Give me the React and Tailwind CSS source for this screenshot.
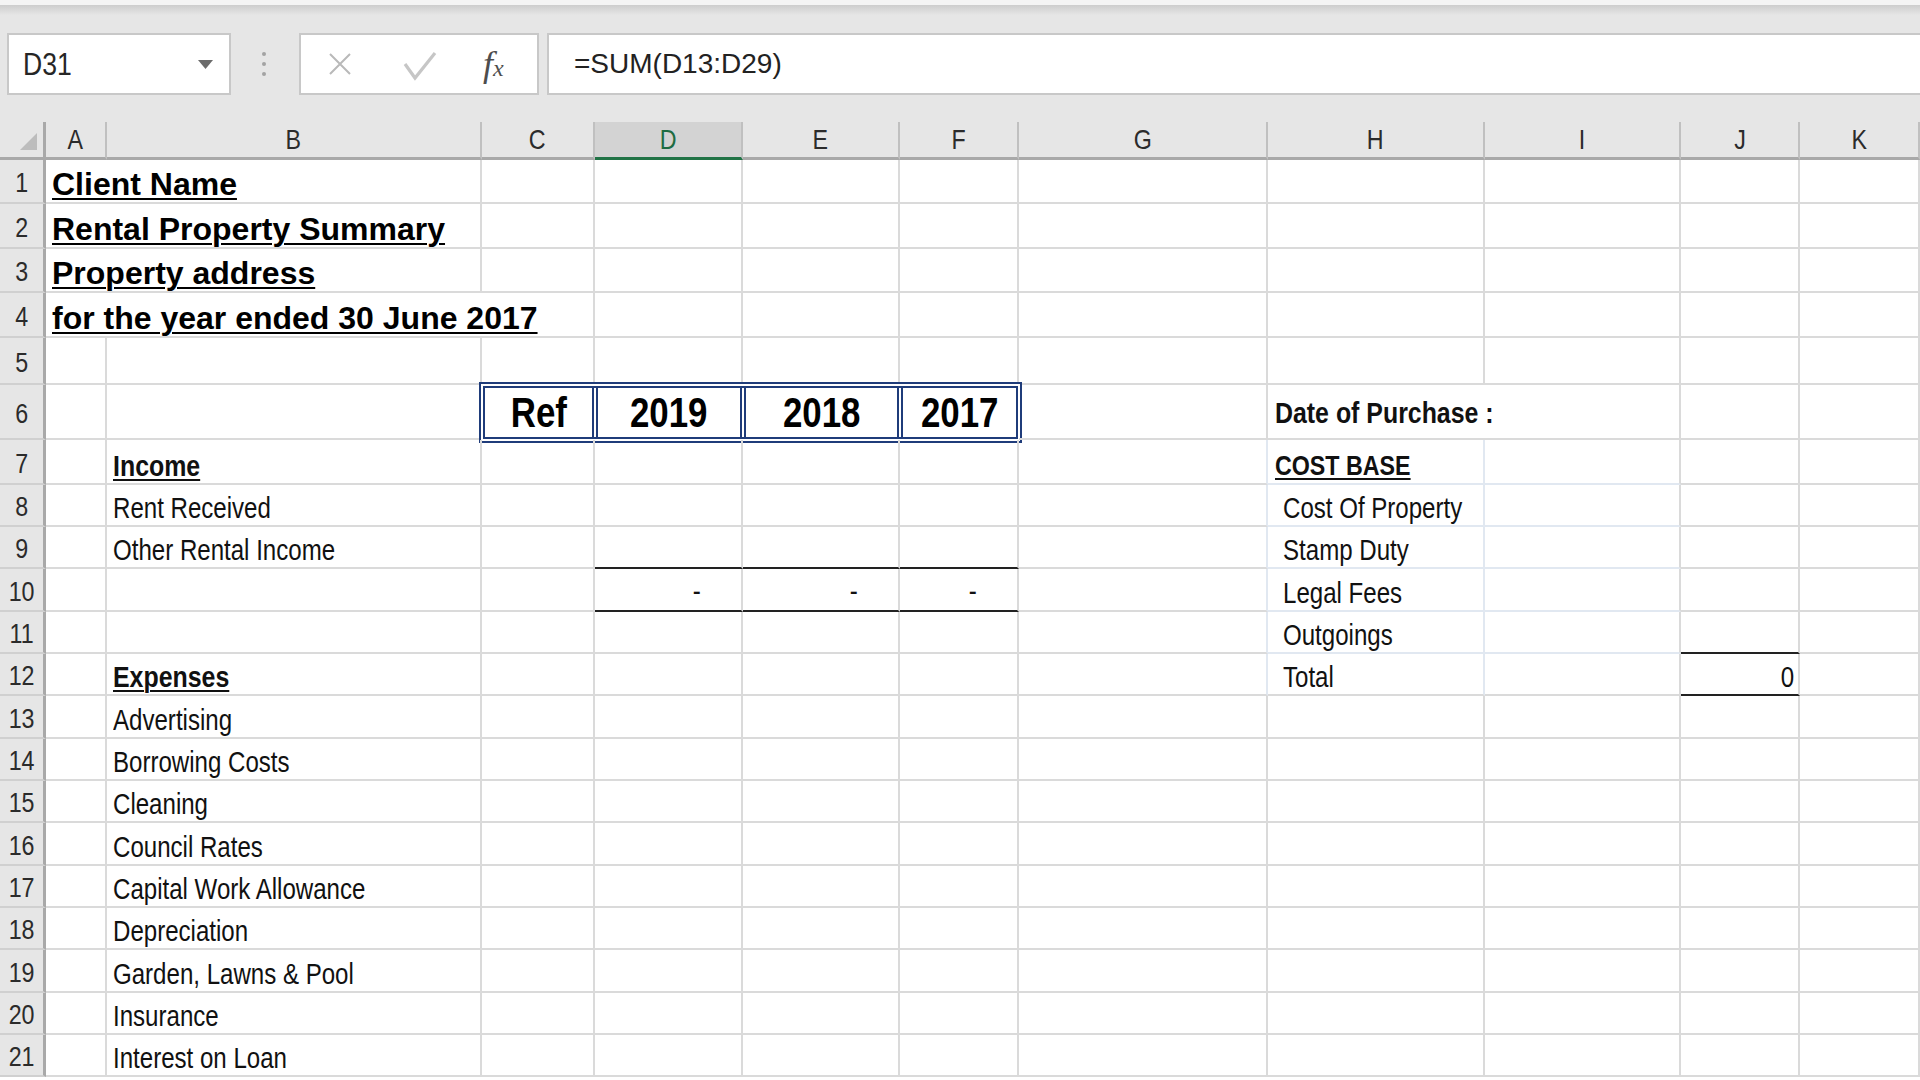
import React from "react";
import clsx from "clsx";

// Excel-style sheet: formula bar + grid, columns A..K, rows 1..21.
// No narrow face is installed, so the Arial-Narrow text is Liberation Sans squeezed with scale-x.
const SANS = "font-['Liberation_Sans',Arial,sans-serif]";
const GRID_COLS =
  "grid grid-cols-[46px_61px_375px_113px_148px_157px_119px_249px_217px_196px_119px_120px]";
const LETTERS = ["A", "B", "C", "D", "E", "F", "G", "H", "I", "J", "K"];
const SPAN = { 1: "", 2: "col-span-2", 3: "col-span-3", 4: "col-span-4" };
const ORIGIN = { left: "origin-left", right: "origin-right", center: "origin-center" };

function Title({ children }) {
  return (
    <span
      className={`${SANS} text-[32px] font-bold leading-[32px] underline decoration-2 underline-offset-[3px] whitespace-nowrap text-black`}
    >
      {children}
    </span>
  );
}

// narrow text (Arial Narrow look)
function Txt({ bold, size = "text-[29px] leading-[29px]", origin = "left", className, children }) {
  return (
    <span
      className={clsx(
        SANS,
        "inline-block scale-x-[0.83] whitespace-nowrap",
        ORIGIN[origin],
        size,
        bold && "font-bold",
        className || "text-[#111]"
      )}
    >
      {children}
    </span>
  );
}

function Heading({ size = "text-[30px] leading-[30px]", children }) {
  return (
    <Txt bold className="text-[#111] underline decoration-2 underline-offset-[3px]" size={size}>
      {children}
    </Txt>
  );
}

function YearBox() {
  return (
    <div className="-m-[3px] w-[calc(100%+6px)] h-[calc(100%+6px)] flex bg-white border-[6px] border-double border-[#1f3c7a]">
      {[
        ["Ref", "w-[107px]"],
        ["2019", "w-[148px] border-l-[6px] border-double border-[#1f3c7a]"],
        ["2018", "w-[157px] border-l-[6px] border-double border-[#1f3c7a]"],
        ["2017", "flex-1 border-l-[6px] border-double border-[#1f3c7a]"],
      ].map(([label, cls]) => (
        <div key={label} className={clsx("flex items-center justify-center pt-[1px]", cls)}>
          <Txt bold origin="center" size="text-[42px] leading-none" className="text-black">
            {label}
          </Txt>
        </div>
      ))}
    </div>
  );
}

function Row({ n, h, cells = {} }) {
  const out = [];
  for (let i = 0; i < LETTERS.length; i++) {
    const L = LETTERS[i];
    const c = cells[L] || {};
    const span = c.span || 1;
    out.push(
      <div
        key={L}
        className={clsx(
          "min-w-0 flex",
          SPAN[span],
          !c.bare && "border-r-2 border-b-2",
          !c.bare && (c.right || "border-r-[#dadada]"),
          !c.bare && (c.bottom || "border-b-[#dadada]"),
          c.className || "items-end pl-[6px] pb-[2px]"
        )}
      >
        {c.content}
      </div>
    );
    i += span - 1;
  }
  return (
    <div className={clsx(GRID_COLS, h)}>
      <div className="flex items-center justify-center pt-[4px] bg-[#e6e6e6] border-r-[3px] border-r-[#a9a9a9] border-b-2 border-b-[#d0d0d0]">
        <Txt origin="center" size="text-[28px] leading-none" className="text-[#2b2b2b]">
          {n}
        </Txt>
      </div>
      {out}
    </div>
  );
}

function ColumnHeaders() {
  return (
    <div className={clsx(GRID_COLS, "h-[38px]")}>
      <div className="relative bg-[#e6e6e6] border-r-[3px] border-r-[#a9a9a9] border-b-[3px] border-b-[#a9a9a9]">
        <svg className="absolute left-[20px] top-[11px]" width="17" height="17" viewBox="0 0 17 17">
          <polygon points="17,0 17,17 0,17" fill="#bdbdbd" />
        </svg>
      </div>
      {LETTERS.map((L) => (
        <div
          key={L}
          className={clsx(
            "flex items-center justify-center border-r-2 border-r-[#c0c0c0] border-b-[3px]",
            L === "D" ? "bg-[#d3d3d3] border-b-[#217346]" : "bg-[#e6e6e6] border-b-[#a9a9a9]"
          )}
        >
          <Txt
            origin="center"
            size="text-[28px] leading-none"
            className={L === "D" ? "text-[#1e6c42]" : "text-[#2b2b2b]"}
          >
            {L}
          </Txt>
        </div>
      ))}
    </div>
  );
}

function FormulaBar() {
  return (
    <div className="h-[122px] bg-[#e6e6e6] flex flex-col">
      <div className="h-[5px] bg-[#f4f4f4]" />
      <div className="h-[10px] bg-gradient-to-b from-[#cdcdcd] to-[#e6e6e6]" />
      <div className="mt-[18px] h-[62px] flex items-stretch">
        <div className="ml-[7px] w-[224px] bg-white border-2 border-[#c8c8c8] flex items-center pl-[14px] pr-[16px]">
          <Txt size="text-[32px] leading-none" className="text-[#262626]">
            D31
          </Txt>
          <svg className="ml-auto" width="15" height="9" viewBox="0 0 15 9">
            <polygon points="0,0 15,0 7.5,9" fill="#6b6b6b" />
          </svg>
        </div>
        <div className="ml-[31px] w-[4px] flex flex-col justify-center gap-[6px]">
          <div className="w-[4px] h-[4px] rounded-full bg-[#a3a3a3]" />
          <div className="w-[4px] h-[4px] rounded-full bg-[#a3a3a3]" />
          <div className="w-[4px] h-[4px] rounded-full bg-[#a3a3a3]" />
        </div>
        <div className="ml-[33px] w-[240px] bg-white border-2 border-[#c8c8c8] flex items-center">
          <svg className="ml-[27px]" width="24" height="24" viewBox="0 0 24 24">
            <path d="M2 2 L22 22 M22 2 L2 22" stroke="#b9b9b9" strokeWidth="2" fill="none" />
          </svg>
          <svg className="ml-[51px] mt-[4px]" width="34" height="30" viewBox="0 0 34 30">
            <path d="M2 13 L12 27 L32 2" stroke="#c6c6c6" strokeWidth="3.2" fill="none" />
          </svg>
          <span className="ml-[46px] font-['Liberation_Serif',serif] italic text-[#4d4d4d] leading-none whitespace-nowrap">
            <span className="text-[36px]">f</span>
            <span className="text-[24px]">x</span>
          </span>
        </div>
        <div className="ml-[8px] flex-1 bg-white border-2 border-r-0 border-[#c8c8c8] flex items-center pl-[25px]">
          <span className={`${SANS} text-[28px] leading-none text-[#222]`}>=SUM(D13:D29)</span>
        </div>
      </div>
    </div>
  );
}

const dash = { content: <Txt origin="right">-</Txt>, className: "items-end justify-end pr-[40px] pb-[4px]" };
const black = "border-b-[#222]";
const indent = "items-end pl-[15px] pb-[2px]";
// the cost-base block carries faint bluish cell borders
const pale = { right: "border-r-[#e1e8f1]", bottom: "border-b-[#e1e8f1]" };

const rows = [
  { n: 1, h: "h-[44px]", cells: { A: { span: 2, content: <Title>Client Name</Title> } } },
  { n: 2, h: "h-[45px]", cells: { A: { span: 2, content: <Title>Rental Property Summary</Title> } } },
  { n: 3, h: "h-[44px]", cells: { A: { span: 2, content: <Title>Property address</Title> } } },
  { n: 4, h: "h-[45px]", cells: { A: { span: 3, content: <Title>for the year ended 30 June 2017</Title> } } },
  { n: 5, h: "h-[47px]" },
  {
    n: 6,
    h: "h-[55px]",
    cells: {
      C: { span: 4, bare: true, className: "flex", content: <YearBox /> },
      H: {
        span: 2,
        className: "items-center pl-[7px] pt-[2px]",
        content: (
          <Txt bold size="text-[30px] leading-none">
            Date of Purchase :
          </Txt>
        ),
      },
    },
  },
  {
    n: 7,
    h: "h-[45px]",
    cells: {
      B: { content: <Heading>Income</Heading> },
      G: { right: pale.right },
      H: {
        ...pale,
        content: <Heading size="text-[28px] leading-[28px]">COST BASE</Heading>,
        className: "items-end pl-[7px] pb-[3px]",
      },
      I: { bottom: pale.bottom },
    },
  },
  {
    n: 8,
    h: "h-[42px]",
    cells: {
      B: { content: <Txt>Rent Received</Txt> },
      G: { right: pale.right },
      H: { ...pale, content: <Txt>Cost Of Property</Txt>, className: indent },
      I: { bottom: pale.bottom },
    },
  },
  {
    n: 9,
    h: "h-[42px]",
    cells: {
      B: { content: <Txt>Other Rental Income</Txt> },
      D: { bottom: black },
      E: { bottom: black },
      F: { bottom: black },
      G: { right: pale.right },
      H: { ...pale, content: <Txt>Stamp Duty</Txt>, className: indent },
      I: { bottom: pale.bottom },
    },
  },
  {
    n: 10,
    h: "h-[43px]",
    cells: {
      D: { ...dash, bottom: black },
      E: { ...dash, bottom: black },
      F: { ...dash, bottom: black },
      G: { right: pale.right },
      H: { ...pale, content: <Txt>Legal Fees</Txt>, className: indent },
      I: { bottom: pale.bottom },
    },
  },
  {
    n: 11,
    h: "h-[42px]",
    cells: {
      G: { right: pale.right },
      H: { ...pale, content: <Txt>Outgoings</Txt>, className: indent },
      I: { bottom: pale.bottom },
      J: { bottom: black },
    },
  },
  {
    n: 12,
    h: "h-[42px]",
    cells: {
      B: { content: <Heading>Expenses</Heading> },
      G: { right: pale.right },
      H: { right: pale.right, content: <Txt>Total</Txt>, className: indent },
      J: {
        content: <Txt origin="right">0</Txt>,
        className: "items-end justify-end pr-[4px] pb-[2px]",
        bottom: black,
      },
    },
  },
  ...[
    ["Advertising", "h-[43px]"],
    ["Borrowing Costs", "h-[42px]"],
    ["Cleaning", "h-[42px]"],
    ["Council Rates", "h-[43px]"],
    ["Capital Work Allowance", "h-[42px]"],
    ["Depreciation", "h-[42px]"],
    ["Garden, Lawns & Pool", "h-[43px]"],
    ["Insurance", "h-[42px]"],
    ["Interest on Loan", "h-[42px]"],
  ].map(([label, h], i) => ({ n: 13 + i, h, cells: { B: { content: <Txt>{label}</Txt> } } })),
];

export default function App() {
  return (
    <div className="w-[1920px] h-[1080px] overflow-hidden bg-white">
      <FormulaBar />
      <ColumnHeaders />
      {rows.map((r) => (
        <Row key={r.n} {...r} />
      ))}
    </div>
  );
}
